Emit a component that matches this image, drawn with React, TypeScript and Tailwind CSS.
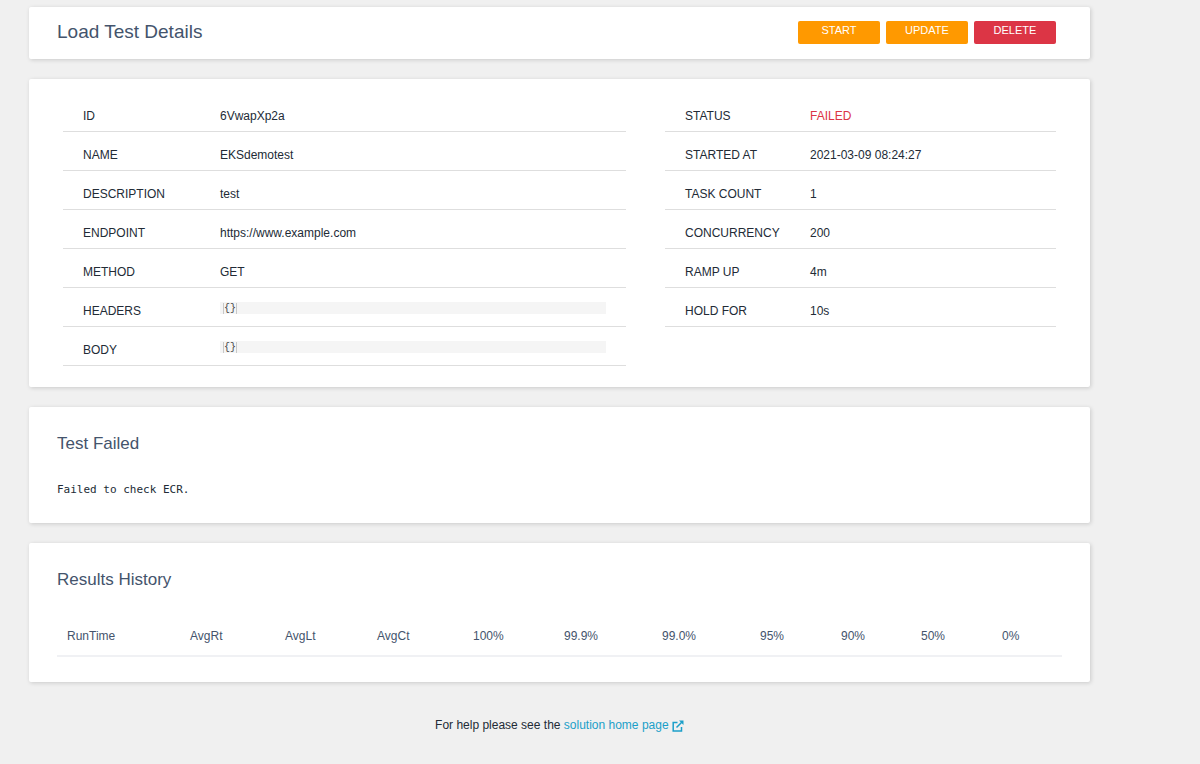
import type { ReactNode } from "react";

type Row = { label: string; value: ReactNode };

const code = (
  <pre className="mt-px h-3 overflow-hidden bg-[#f5f5f5] px-[3px] font-['DejaVu_Sans_Mono',monospace] text-[10px] leading-3 text-[#444]">
    <code className="inline-block border-x border-[#c8c8c8]">{"{}"}</code>
  </pre>
);

const left: Row[] = [
  { label: "ID", value: "6VwapXp2a" },
  { label: "NAME", value: "EKSdemotest" },
  { label: "DESCRIPTION", value: "test" },
  { label: "ENDPOINT", value: "https://www.example.com" },
  { label: "METHOD", value: "GET" },
  { label: "HEADERS", value: code },
  { label: "BODY", value: code },
];

const right: Row[] = [
  { label: "STATUS", value: <span className="text-[#dc3545]">FAILED</span> },
  { label: "STARTED AT", value: "2021-03-09 08:24:27" },
  { label: "TASK COUNT", value: "1" },
  { label: "CONCURRENCY", value: "200" },
  { label: "RAMP UP", value: "4m" },
  { label: "HOLD FOR", value: "10s" },
];

const columns = [
  { name: "RunTime", width: "w-[123px]" },
  { name: "AvgRt", width: "w-[95px]" },
  { name: "AvgLt", width: "w-[92px]" },
  { name: "AvgCt", width: "w-[96px]" },
  { name: "100%", width: "w-[91px]" },
  { name: "99.9%", width: "w-[98px]" },
  { name: "99.0%", width: "w-[98px]" },
  { name: "95%", width: "w-[81px]" },
  { name: "90%", width: "w-[80px]" },
  { name: "50%", width: "w-[81px]" },
  { name: "0%", width: "w-[70px]" },
];

function Card({ className, children }: { className: string; children: ReactNode }) {
  return (
    <section className={`rounded-xs bg-white shadow-[1px_1px_4px_rgba(0,0,0,0.16)] ${className}`}>
      {children}
    </section>
  );
}

function Details({ rows, labelWidth }: { rows: Row[]; labelWidth: string }) {
  return (
    <dl>
      {rows.map((row) => (
        <div key={row.label} className="flex border-b border-[#dedede] px-5 pt-[13px] pb-[5px] leading-5">
          <dt className={`shrink-0 ${labelWidth}`}>{row.label}</dt>
          <dd className="min-w-0 grow">{row.value}</dd>
        </div>
      ))}
    </dl>
  );
}

function ActionButton({ color, children }: { color: string; children: ReactNode }) {
  return (
    <button type="button" className={`h-[23px] w-[82px] rounded-xs pb-[3px] text-[11px] text-white ${color}`}>
      {children}
    </button>
  );
}

export default function App() {
  return (
    <div className="min-h-screen bg-[#f0f0f0] pt-[7px] pr-[110px] pb-7 pl-[29px] font-['Liberation_Sans',Arial,sans-serif] text-xs text-[#222b36]">
      <main className="flex flex-col gap-5">
        <Card className="flex h-[52px] items-center justify-between pr-[34px] pb-[2px] pl-7">
          <h1 className="text-[19px] text-[#44546c]">Load Test Details</h1>
          <div className="flex gap-[6px]">
            <ActionButton color="bg-[#ff9900]">START</ActionButton>
            <ActionButton color="bg-[#ff9900]">UPDATE</ActionButton>
            <ActionButton color="bg-[#dc3545]">DELETE</ActionButton>
          </div>
        </Card>
        <Card className="grid grid-cols-[563fr_391fr] gap-x-[39px] px-[34px] pt-[14px] pb-[21px]">
          <Details rows={left} labelWidth="w-[137px]" />
          <Details rows={right} labelWidth="w-[125px]" />
        </Card>
        <Card className="px-7 pt-[25px] pb-[23px]">
          <h2 className="text-[17px] leading-6 text-[#44546c]">Test Failed</h2>
          <pre className="mt-6 font-['DejaVu_Sans_Mono',monospace] text-[11px] leading-5">Failed to check ECR.</pre>
        </Card>
        <Card className="px-7 pt-[25px] pb-[25px]">
          <h2 className="text-[17px] leading-6 text-[#44546c]">Results History</h2>
          <table className="mt-[22px] w-full table-fixed border-b-2 border-[#f0f1f4] text-left text-[#44546c]">
            <thead>
              <tr>
                {columns.map((c) => (
                  <th key={c.name} scope="col" className={`px-[10px] pt-3 pb-[9px] leading-5 font-normal ${c.width}`}>
                    {c.name}
                  </th>
                ))}
              </tr>
            </thead>
          </table>
        </Card>
      </main>
      <footer className="mt-[33px] text-center leading-5">
        For help please see the{" "}
        <a href="#help" className="text-[#1b9fc9]">
          solution home page{" "}
          <svg viewBox="0 0 12 12" className="inline size-3 align-[-3px]" fill="none" stroke="currentColor" strokeWidth="1.5" aria-hidden="true">
            <path d="M5.5 2.5H1.2V11H9.5V7M4.5 7.5 10.5 1.5" />
            <path d="M7 .5h4.5V5z" fill="currentColor" stroke="none" />
          </svg>
        </a>
      </footer>
    </div>
  );
}
